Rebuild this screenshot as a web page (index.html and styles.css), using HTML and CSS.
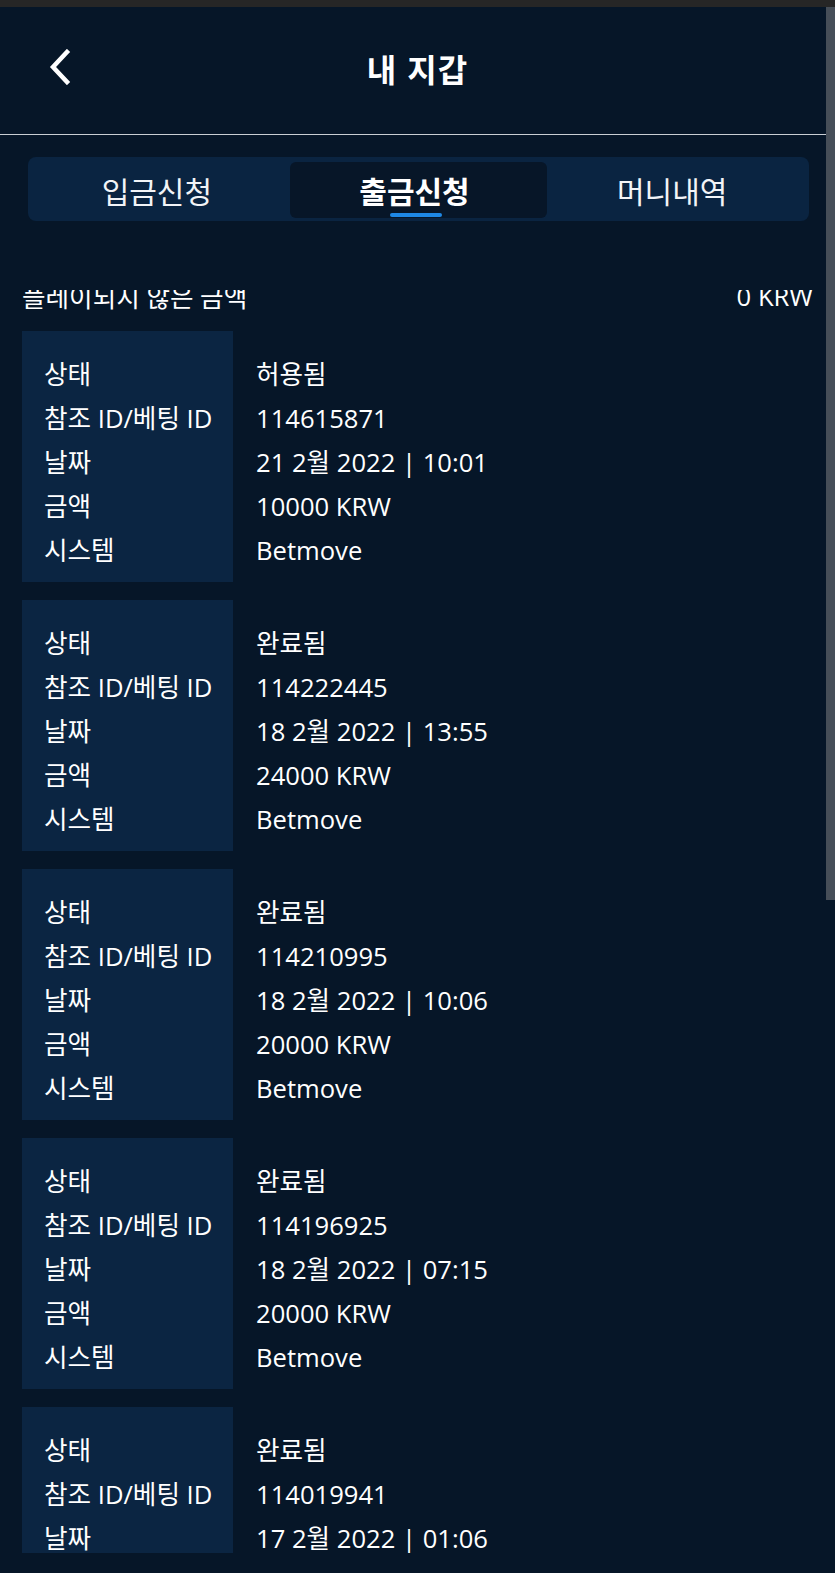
FILE: index.html
```html
<!DOCTYPE html>
<html lang="ko">
<head>
    <meta charset="UTF-8">
    <meta name="viewport" content="width=device-width, initial-scale=1.0">
    <title>내 지갑</title>
    <link rel="stylesheet" href="styles.css">
</head>
<body>
    <div class="top-strip"></div>

    <div class="page">
        <header>
            <button class="back-btn" aria-label="뒤로">
                <svg width="24" height="36" viewBox="0 0 24 36">
                    <path d="M19 3 L5 18 L19 33" fill="none" stroke="#fff" stroke-width="4.5" stroke-linecap="square" stroke-linejoin="miter"/>
                </svg>
            </button>
            <h1>내 지갑</h1>
        </header>

        <nav class="tabs">
            <div class="tab">입금신청</div>
            <div class="tab active">출금신청</div>
            <div class="tab">머니내역</div>
        </nav>

        <main class="history">
            <div class="summary">
                <span>플레이되지 않은 금액</span>
                <span>0 KRW</span>
            </div>
            <div id="history-list"></div>
        </main>

        <div class="scrollbar"></div>
    </div>

    <script>
        document.addEventListener("DOMContentLoaded", () => {
            const historyList = document.getElementById("history-list");

            // 출금 내역 데이터
            const items = [
                { status: "허용됨", id: "114615871", date: "21 2월 2022 | 10:01", amount: "10000 KRW", system: "Betmove" },
                { status: "완료됨", id: "114222445", date: "18 2월 2022 | 13:55", amount: "24000 KRW", system: "Betmove" },
                { status: "완료됨", id: "114210995", date: "18 2월 2022 | 10:06", amount: "20000 KRW", system: "Betmove" },
                { status: "완료됨", id: "114196925", date: "18 2월 2022 | 07:15", amount: "20000 KRW", system: "Betmove" },
                { status: "완료됨", id: "114019941", date: "17 2월 2022 | 01:06", amount: "10000 KRW", system: "Betmove" }
            ];

            items.forEach(item => {
                const card = document.createElement("div");
                card.className = "card";
                card.innerHTML = `
                    <div class="labels">
                        <span>상태</span>
                        <span>참조 ID/베팅 ID</span>
                        <span>날짜</span>
                        <span>금액</span>
                        <span>시스템</span>
                    </div>
                    <div class="values">
                        <span>${item.status}</span>
                        <span>${item.id}</span>
                        <span>${item.date}</span>
                        <span>${item.amount}</span>
                        <span>${item.system}</span>
                    </div>
                `;
                historyList.appendChild(card);
            });
        });
    </script>
</body>
</html>
```

FILE: styles.css
```css
body {
    font-family: "Open Sans", "Noto Sans CJK KR", sans-serif;
    background-color: #061628;
    color: white;
    margin: 0;
    padding: 0;
    overflow: hidden;
}

.top-strip {
    height: 7px;
    background-color: #262626;
}

.page {
    position: relative;
    height: 1566px;
}

header {
    height: 127px;
    border-bottom: 1px solid #c9ced4;
    display: flex;
    align-items: center;
    justify-content: center;
    position: relative;
}

h1 {
    margin: 0;
    font-family: "Noto Sans CJK KR", sans-serif;
    font-size: 32px;
    font-weight: 700;
    letter-spacing: 1px;
    padding-bottom: 5px;
}

.back-btn {
    position: absolute;
    left: 48px;
    top: 42px;
    background: none;
    border: none;
    padding: 0;
    cursor: pointer;
}

.tabs {
    margin: 22px 26px 0 28px;
    height: 64px;
    box-sizing: border-box;
    padding: 5px 4px 3px;
    background-color: #0a2441;
    border-radius: 8px;
    display: grid;
    grid-template-columns: 1fr 1fr 1fr;
}

.tab {
    display: flex;
    align-items: center;
    justify-content: center;
    font-family: "Noto Sans CJK KR", sans-serif;
    font-size: 30px;
    color: #f2f4f7;
    border-radius: 6px;
    position: relative;
    padding-right: 8px;
}

.tab.active {
    background-color: #071628;
    font-weight: 700;
    color: white;
}

.tab.active::after {
    content: "";
    position: absolute;
    bottom: 1px;
    left: 50%;
    width: 52px;
    height: 4px;
    margin-left: -28px;
    background-color: #1e88e5;
    border-radius: 2px;
}

.history {
    margin-top: 69px;
    height: 1263px;
    overflow: hidden;
}

.summary {
    margin-top: -11px;
    padding: 0 22px 0 22px;
    height: 34px;
    display: flex;
    justify-content: space-between;
    align-items: center;
    font-size: 25.6px;
}

#history-list {
    margin-top: 18px;
    padding-left: 22px;
}

.card {
    display: flex;
    font-size: 25.6px;
    margin-bottom: 18px;
}

.labels,
.values {
    display: flex;
    flex-direction: column;
    padding: 22px 0 9px;
}

.labels {
    width: 211px;
    box-sizing: border-box;
    padding-left: 22px;
    background-color: #0b2542;
}

.values {
    padding-left: 23px;
}

.labels span,
.values span {
    height: 44px;
    line-height: 44px;
    white-space: nowrap;
}

.scrollbar {
    position: absolute;
    top: 0;
    right: 0;
    width: 9px;
    height: 893px;
    background-color: #464e58;
}
```
